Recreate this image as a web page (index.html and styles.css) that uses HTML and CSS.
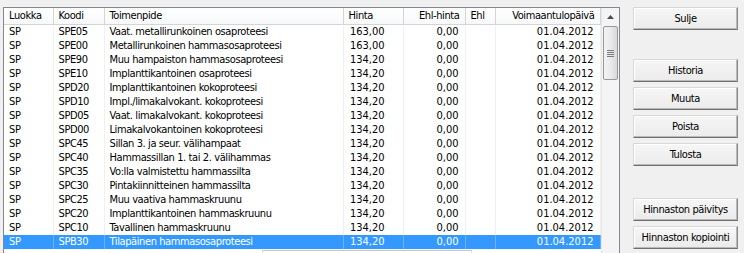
FILE: index.html
```html
<!DOCTYPE html>
<html lang="fi">
<head>
<meta charset="utf-8">
<title>Hinnasto</title>
<link rel="stylesheet" href="styles.css">
</head>
<body>
<div class="window">
  <div class="listbox">
    <div class="gridarea">
      <table class="grid">
        <colgroup>
          <col class="c-luokka"><col class="c-koodi"><col class="c-toim"><col class="c-hinta"><col class="c-ehlh"><col class="c-ehl"><col class="c-voim">
        </colgroup>
        <thead>
          <tr>
            <th>Luokka</th><th>Koodi</th><th>Toimenpide</th><th>Hinta</th><th class="r">Ehl-hinta</th><th>Ehl</th><th class="r">Voimaantulopäivä</th>
          </tr>
        </thead>
        <tbody>
          <tr><td>SP</td><td>SPE05</td><td>Vaat. metallirunkoinen osaproteesi</td><td class="price">163,00</td><td class="r">0,00</td><td></td><td class="r">01.04.2012</td></tr>
          <tr><td>SP</td><td>SPE00</td><td>Metallirunkoinen hammasosaproteesi</td><td class="price">163,00</td><td class="r">0,00</td><td></td><td class="r">01.04.2012</td></tr>
          <tr><td>SP</td><td>SPE90</td><td>Muu hampaiston hammasosaproteesi</td><td class="price">134,20</td><td class="r">0,00</td><td></td><td class="r">01.04.2012</td></tr>
          <tr><td>SP</td><td>SPE10</td><td>Implanttikantoinen osaproteesi</td><td class="price">134,20</td><td class="r">0,00</td><td></td><td class="r">01.04.2012</td></tr>
          <tr><td>SP</td><td>SPD20</td><td>Implanttikantoinen kokoproteesi</td><td class="price">134,20</td><td class="r">0,00</td><td></td><td class="r">01.04.2012</td></tr>
          <tr><td>SP</td><td>SPD10</td><td>Impl./limakalvokant. kokoproteesi</td><td class="price">134,20</td><td class="r">0,00</td><td></td><td class="r">01.04.2012</td></tr>
          <tr><td>SP</td><td>SPD05</td><td>Vaat. limakalvokant. kokoproteesi</td><td class="price">134,20</td><td class="r">0,00</td><td></td><td class="r">01.04.2012</td></tr>
          <tr><td>SP</td><td>SPD00</td><td>Limakalvokantoinen kokoproteesi</td><td class="price">134,20</td><td class="r">0,00</td><td></td><td class="r">01.04.2012</td></tr>
          <tr><td>SP</td><td>SPC45</td><td>Sillan 3. ja seur. välihampaat</td><td class="price">134,20</td><td class="r">0,00</td><td></td><td class="r">01.04.2012</td></tr>
          <tr><td>SP</td><td>SPC40</td><td>Hammassillan 1. tai 2. välihammas</td><td class="price">134,20</td><td class="r">0,00</td><td></td><td class="r">01.04.2012</td></tr>
          <tr><td>SP</td><td>SPC35</td><td>Vo:lla valmistettu hammassilta</td><td class="price">134,20</td><td class="r">0,00</td><td></td><td class="r">01.04.2012</td></tr>
          <tr><td>SP</td><td>SPC30</td><td>Pintakiinnitteinen hammassilta</td><td class="price">134,20</td><td class="r">0,00</td><td></td><td class="r">01.04.2012</td></tr>
          <tr><td>SP</td><td>SPC25</td><td>Muu vaativa hammaskruunu</td><td class="price">134,20</td><td class="r">0,00</td><td></td><td class="r">01.04.2012</td></tr>
          <tr><td>SP</td><td>SPC20</td><td>Implanttikantoinen hammaskruunu</td><td class="price">134,20</td><td class="r">0,00</td><td></td><td class="r">01.04.2012</td></tr>
          <tr><td>SP</td><td>SPC10</td><td>Tavallinen hammaskruunu</td><td class="price">134,20</td><td class="r">0,00</td><td></td><td class="r">01.04.2012</td></tr>
          <tr class="selected"><td>SP</td><td>SPB30</td><td>Tilapäinen hammasosaproteesi</td><td class="price">134,20</td><td class="r">0,00</td><td></td><td class="r">01.04.2012</td></tr>
        </tbody>
      </table>
      <div class="hscroll"><div class="hthumb"></div></div>
    </div>
    <div class="vscroll">
      <div class="arrow-up">
        <svg width="7" height="4" viewBox="0 0 7 4"><path d="M0 4 L3.5 0 L7 4 Z" fill="#4d4d4d"/></svg>
      </div>
      <div class="thumb">
        <div class="grip"><span></span><span></span><span></span><span></span></div>
      </div>
    </div>
  </div>
  <div class="buttons">
    <button class="btn">Sulje</button>
    <div class="group g1">
      <button class="btn">Historia</button>
      <button class="btn">Muuta</button>
      <button class="btn">Poista</button>
      <button class="btn">Tulosta</button>
    </div>
    <div class="group g2">
      <button class="btn">Hinnaston päivitys</button>
      <button class="btn">Hinnaston kopiointi</button>
    </div>
  </div>
</div>
</body>
</html>
```
FILE: styles.css
```css
html, body {
  margin: 0;
  padding: 0;
  height: 100%;
  overflow: hidden;
  background: #f0f0f0;
}

body {
  font-family: "DejaVu Sans Condensed", "DejaVu Sans", sans-serif;
  font-size: 11px;
  letter-spacing: -0.4px;
  color: #000;
}

.window {
  display: flex;
  align-items: flex-start;
  padding: 7px 0 0 3px;
}

.listbox {
  display: flex;
  width: 615px;
  height: 300px;
  border: 1px solid #828790;
  background: #fff;
}

.gridarea {
  flex: 1;
  display: flex;
  flex-direction: column;
}

.grid {
  border-collapse: collapse;
  table-layout: fixed;
  width: 596px;
}

.c-luokka { width: 49px; }
.c-koodi { width: 51px; }
.c-toim { width: 239px; }
.c-hinta { width: 60px; }
.c-ehlh { width: 62px; }
.c-ehl { width: 30px; }
.c-voim { width: 105px; }

.grid th {
  height: 16px;
  padding: 0 5px;
  font-weight: normal;
  text-align: left;
  white-space: nowrap;
  overflow: hidden;
  background: linear-gradient(#ffffff, #f7f8fa);
  border-right: 1px solid #d5d5d5;
  border-bottom: 1px solid #d5d5d5;
  box-sizing: border-box;
}

.grid th.r { text-align: right; }

.grid td {
  height: 14px;
  padding: 0 5px;
  line-height: 14px;
  white-space: nowrap;
  overflow: hidden;
  border-right: 1px solid #f0f0f0;
  box-sizing: border-box;
}

.grid td.r { text-align: right; padding-right: 6px; letter-spacing: 0; }
.grid td.price { text-align: right; padding-right: 18px; letter-spacing: 0; }

.grid tr.selected td {
  background: #3399ff;
  color: #fff;
  border-right-color: #6cb3ff;
}

.hscroll {
  display: flex;
  padding: 1px 0 0 258px;
}

.hthumb {
  width: 208px;
  height: 10px;
  border-top: 1px solid #c8c8c8;
  border-left: 1px solid #e0e0e0;
  border-right: 1px solid #e0e0e0;
}

.vscroll {
  width: 17px;
  display: flex;
  flex-direction: column;
  background: #f4f4f4;
  border-left: 1px solid #e6e6e6;
}

.arrow-up {
  height: 17px;
  display: flex;
  align-items: center;
  justify-content: center;
}

.thumb {
  margin: 1px 1px 0 1px;
  height: 54px;
  border: 1px solid #989898;
  border-radius: 2px;
  background: linear-gradient(to right, #f3f3f3, #eaeaea 50%, #d8d8d8);
  display: flex;
  align-items: center;
  justify-content: center;
  box-sizing: border-box;
}

.grip {
  display: flex;
  flex-direction: column;
  gap: 1px;
}

.grip span {
  display: block;
  width: 7px;
  height: 1px;
  background: #7a7a7a;
}

.buttons {
  margin-left: 13px;
  display: flex;
  flex-direction: column;
  width: 105px;
}

.group {
  display: flex;
  flex-direction: column;
  gap: 5px;
}

.g1 { margin-top: 29px; }
.g2 { margin-top: 32px; }

.btn {
  width: 105px;
  height: 23px;
  padding: 0;
  font-family: "DejaVu Sans Condensed", "DejaVu Sans", sans-serif;
  font-size: 11px;
  letter-spacing: -0.4px;
  color: #000;
  background: linear-gradient(#f6f6f6, #ebebeb);
  border: 1px solid;
  border-color: #d8d8d8 #8a8a8a #6f6f6f #d8d8d8;
  box-shadow: inset -1px -1px 0 #b9b9b9, inset 1px 1px 0 #ffffff;
  border-radius: 0;
}
```
